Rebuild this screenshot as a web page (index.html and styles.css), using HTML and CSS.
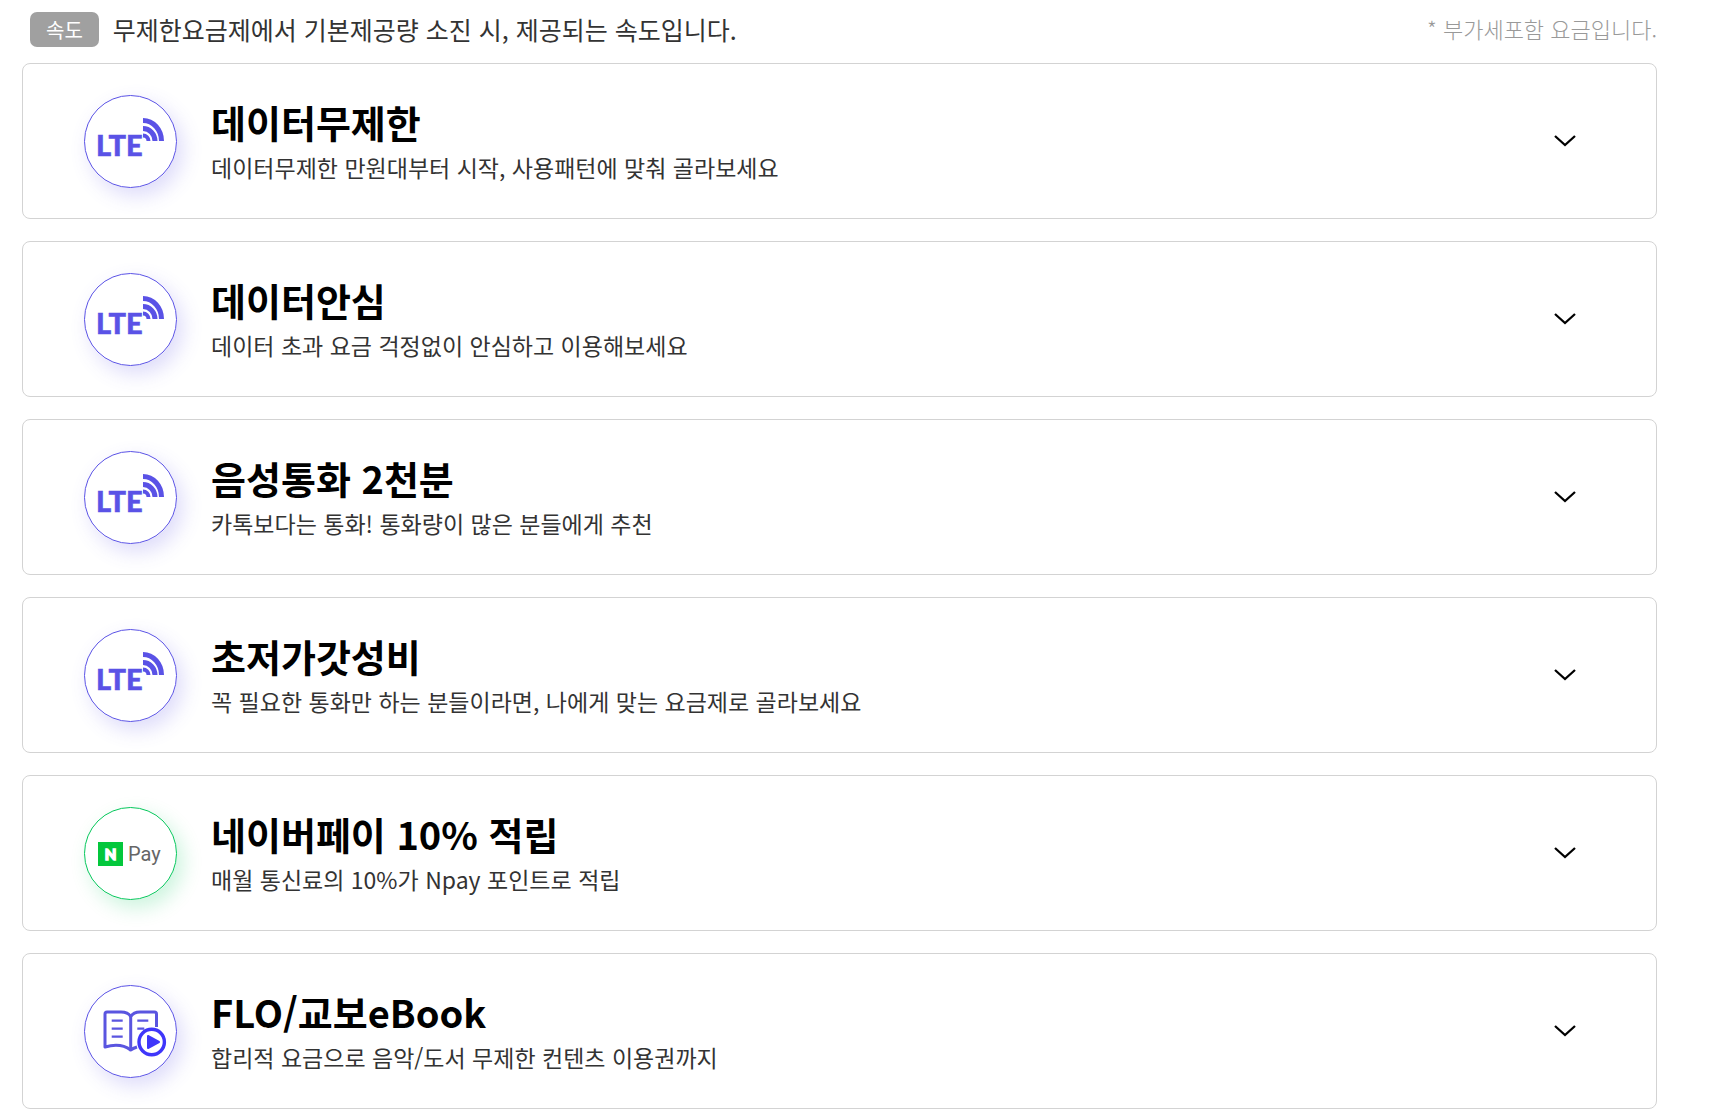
FILE: index.html
```
<!DOCTYPE html>
<html lang="ko">
<head>
    <meta charset="UTF-8">
    <meta name="viewport" content="width=device-width, initial-scale=1.0">
    <title>요금제 안내</title>
    <link rel="stylesheet" href="styles.css">
</head>
<body>
    <!-- 공통 아이콘 -->
    <svg class="sprite" aria-hidden="true">
        <symbol id="icon-lte" viewBox="0 0 93 93">
            <text class="lte-text" x="12" y="61">LTE</text>
            <g fill="none" stroke="#5a52e6">
                <path d="M59 25.5A18.5 20.5 0 0 1 77.500 46" stroke-width="5"/>
                <path d="M59 33.5A12 12.5 0 0 1 71 46" stroke-width="5"/>
                <path d="M59 40.5A5.5 5.5 0 0 1 64.500 46" stroke-width="4"/>
            </g>
        </symbol>
        <symbol id="icon-arrow" viewBox="0 0 22 12">
            <path d="M1 1l10 9 10-9" fill="none" stroke="#000" stroke-width="2.3"/>
        </symbol>
    </svg>

    <div class="container">
        <div class="notice">
            <span class="badge">속도</span>
            <p class="notice-text">무제한요금제에서 기본제공량 소진 시, 제공되는 속도입니다.</p>
            <p class="vat">* 부가세포함 요금입니다.</p>
        </div>

        <!-- 요금제 목록 -->
        <ul class="plan-list">
            <li>
                <button type="button" class="plan" aria-expanded="false">
                    <span class="plan-icon"><svg><use href="#icon-lte"/></svg></span>
                    <span class="plan-text">
                        <strong>데이터무제한</strong>
                        <span>데이터무제한 만원대부터 시작, 사용패턴에 맞춰 골라보세요</span>
                    </span>
                    <svg class="arrow"><use href="#icon-arrow"/></svg>
                </button>
            </li>
            <li>
                <button type="button" class="plan" aria-expanded="false">
                    <span class="plan-icon"><svg><use href="#icon-lte"/></svg></span>
                    <span class="plan-text">
                        <strong>데이터안심</strong>
                        <span>데이터 초과 요금 걱정없이 안심하고 이용해보세요</span>
                    </span>
                    <svg class="arrow"><use href="#icon-arrow"/></svg>
                </button>
            </li>
            <li>
                <button type="button" class="plan" aria-expanded="false">
                    <span class="plan-icon"><svg><use href="#icon-lte"/></svg></span>
                    <span class="plan-text">
                        <strong>음성통화 2천분</strong>
                        <span>카톡보다는 통화! 통화량이 많은 분들에게 추천</span>
                    </span>
                    <svg class="arrow"><use href="#icon-arrow"/></svg>
                </button>
            </li>
            <li>
                <button type="button" class="plan" aria-expanded="false">
                    <span class="plan-icon"><svg><use href="#icon-lte"/></svg></span>
                    <span class="plan-text">
                        <strong>초저가갓성비</strong>
                        <span>꼭 필요한 통화만 하는 분들이라면, 나에게 맞는 요금제로 골라보세요</span>
                    </span>
                    <svg class="arrow"><use href="#icon-arrow"/></svg>
                </button>
            </li>
            <li>
                <button type="button" class="plan" aria-expanded="false">
                    <span class="plan-icon green">
                        <svg viewBox="0 0 93 93">
                            <rect x="14" y="35" width="25" height="24" fill="#03c73c"/>
                            <text class="n-text" x="26.5" y="53">N</text>
                            <text class="pay-text" x="44" y="54">Pay</text>
                        </svg>
                    </span>
                    <span class="plan-text">
                        <strong>네이버페이 10% 적립</strong>
                        <span>매월 통신료의 10%가 Npay 포인트로 적립</span>
                    </span>
                    <svg class="arrow"><use href="#icon-arrow"/></svg>
                </button>
            </li>
            <li>
                <button type="button" class="plan" aria-expanded="false">
                    <span class="plan-icon">
                        <svg viewBox="0 0 93 93">
                            <g fill="none" stroke="#5a55e0" stroke-width="3" stroke-linejoin="round">
                                <path d="M46.7 65C40 60 31 59 21 62V29q0-2 2-2H37q7 0 9.7 4.5Q49.5 27 56 27H70.500q2 0 2 2V42"/>
                                <path d="M46.7 31V65q3-2 6.3-3"/>
                                <path d="M27.7 35.7h11M27.7 43.7h11M27.7 51.7h11M53.3 35.7h11M53.3 43.7h7" stroke-width="2.3"/>
                            </g>
                            <circle cx="67.7" cy="57" r="12.7" fill="#fff" stroke="#3f36fa" stroke-width="3.4"/>
                            <path d="M64 51v12l11-6z" fill="#3f36fa" stroke="#3f36fa" stroke-width="2" stroke-linejoin="round"/>
                        </svg>
                    </span>
                    <span class="plan-text">
                        <strong>FLO/교보eBook</strong>
                        <span>합리적 요금으로 음악/도서 무제한 컨텐츠 이용권까지</span>
                    </span>
                    <svg class="arrow"><use href="#icon-arrow"/></svg>
                </button>
            </li>
        </ul>
    </div>
</body>
</html>
```
FILE: styles.css
```
* {
    box-sizing: border-box;
}
body {
    margin: 0;
    background-color: #fff;
    color: #333;
    font-family: "Noto Sans CJK KR", sans-serif;
}
p, ul {
    margin: 0;
    padding: 0;
}
.sprite {
    display: none;
}
.container {
    padding: 0 63px 0 22px;
}
/* 상단 안내 */
.notice {
    display: flex;
    align-items: center;
    height: 63px;
    padding: 0 0 4px 8px;
}
.badge {
    padding: 0 16px;
    border-radius: 7px;
    background-color: #a0a0a0;
    color: #fff;
    font-size: 20px;
    line-height: 35px;
}
.notice-text {
    margin-left: 14px;
    padding-bottom: 2px;
    font-size: 25px;
}
.vat {
    margin-left: auto;
    padding-bottom: 4px;
    color: #999;
    font-size: 22px;
    font-weight: 300;
}
/* 요금제 카드 */
.plan-list {
    display: flex;
    flex-direction: column;
    gap: 22px;
    list-style: none;
}
.plan {
    display: flex;
    align-items: center;
    width: 100%;
    height: 156px;
    padding: 0 80px 0 61px;
    border: 1px solid #d3d3d3;
    border-radius: 8px;
    background-color: #fff;
    color: #333;
    font-family: inherit;
    text-align: left;
    cursor: pointer;
}
.plan-icon {
    width: 93px;
    height: 93px;
    border-radius: 50%;
    background-color: #fff;
    outline: 1px solid #5a52e6;
    outline-offset: -1px;
    box-shadow: 6px 8px 20px rgba(90, 82, 230, 0.2);
}
.plan-icon svg {
    display: block;
    width: 93px;
    height: 93px;
}
.plan-icon.green {
    outline-color: #03c75a;
    box-shadow: 6px 8px 20px rgba(3, 199, 90, 0.2);
}
.lte-text {
    fill: #5a52e6;
    stroke: #5a52e6;
    stroke-width: 0.5px;
    font: 900 29px Lato, sans-serif;
}
.n-text {
    fill: #fff;
    stroke: #fff;
    stroke-width: 1.5px;
    font: 900 15px Lato, sans-serif;
    text-anchor: middle;
}
.pay-text {
    fill: #666;
    font: 400 20px Roboto, sans-serif;
}
.plan-text {
    display: flex;
    flex-direction: column;
    margin-left: 34px;
    padding-bottom: 2px;
    font-size: 23px;
    line-height: 36px;
}
.plan-text strong {
    color: #000;
    font-size: 38px;
    line-height: 54px;
}
.arrow {
    width: 22px;
    height: 12px;
    margin-left: auto;
}
```
